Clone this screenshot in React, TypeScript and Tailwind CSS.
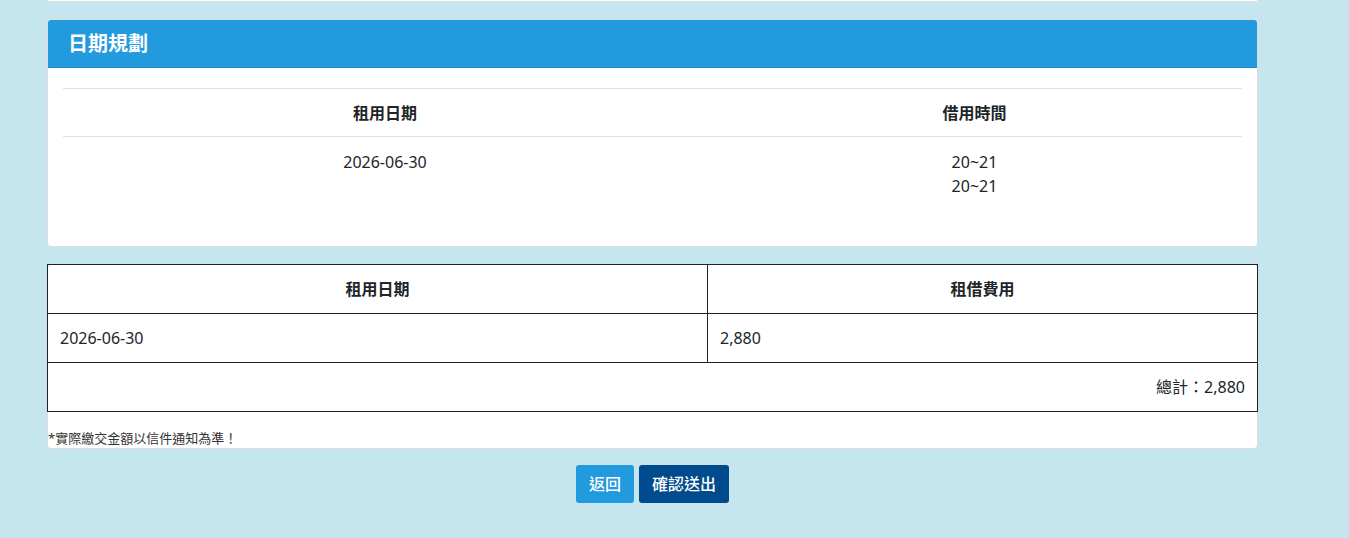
import React from "react";

const font = { fontFamily: '"Noto Sans", "Noto Sans CJK TC", sans-serif' };

export default function App() {
  return (
    <div className="min-h-screen bg-[#c5e5ef] text-[#212529]" style={font}>
      <div className="ml-[47px] w-[1211px] pb-[32px]">
        {/* tail of the previous card */}
        <div className="h-[2px] bg-white border-b border-x border-[#dcdcdc] rounded-b-[3px]" />

        {/* date planning card */}
        <div className="mt-[17px] bg-white border border-[#dcdcdc] rounded-[4px] overflow-hidden">
          <div className="h-[48px] bg-[#229ade] border-b border-[#1c8bc9] px-[20px] flex items-center text-white font-bold text-[20px]">
            日期規劃
          </div>
          <div className="px-[15px] pt-[20px] pb-[48px]">
            <table className="w-full border-collapse text-[16px]">
              <thead>
                <tr className="border-t border-b border-[#dee2e6]">
                  <th className="w-[644px] h-[48px] p-0 text-center font-bold align-middle">租用日期</th>
                  <th className="h-[48px] p-0 text-center font-bold align-middle">借用時間</th>
                </tr>
              </thead>
              <tbody>
                <tr>
                  <td className="pt-[13px] text-center align-top leading-[24px]">2026-06-30</td>
                  <td className="pt-[13px] text-center align-top leading-[24px]">
                    <div>20~21</div>
                    <div>20~21</div>
                  </td>
                </tr>
              </tbody>
            </table>
          </div>
        </div>

        {/* fee card */}
        <div className="mt-[17px] bg-white border border-[#dcdcdc] rounded-[4px]">
          <table className="-m-px w-[calc(100%+2px)] border-collapse text-[16px]">
            <thead>
              <tr>
                <th className="w-[660px] h-[49px] border border-[#222] font-bold text-center align-middle">租用日期</th>
                <th className="h-[49px] border border-[#222] font-bold text-center align-middle">租借費用</th>
              </tr>
            </thead>
            <tbody>
              <tr>
                <td className="h-[49px] border border-[#222] px-[12px] text-left align-middle">2026-06-30</td>
                <td className="h-[49px] border border-[#222] px-[12px] text-left align-middle">2,880</td>
              </tr>
              <tr>
                <td colSpan={2} className="h-[49px] border border-[#222] px-[12px] text-right align-middle">
                  總計：2,880
                </td>
              </tr>
            </tbody>
          </table>
          <div className="pt-[18px] pb-[1px] text-[13px] leading-[18px] text-[#333]">*實際繳交金額以信件通知為準！</div>
        </div>

        {/* actions */}
        <div className="mt-[16px] flex justify-center gap-[5px]">
          <button className="h-[38px] px-[13px] rounded-[3px] bg-[#229ade] text-white text-[16px] font-medium">返回</button>
          <button className="h-[38px] px-[13px] rounded-[3px] bg-[#004b8d] text-white text-[16px] font-medium">確認送出</button>
        </div>
      </div>
    </div>
  );
}
